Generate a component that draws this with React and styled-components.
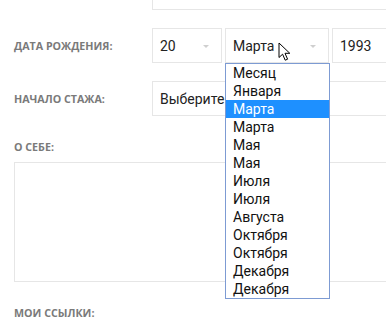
import React from 'react';
import styled, { createGlobalStyle } from 'styled-components';

const GlobalStyle = createGlobalStyle`
  html, body {
    margin: 0;
    padding: 0;
    background: #fff;
    overflow: hidden;
  }
  body {
    font-family: Roboto, "Liberation Sans", sans-serif;
  }
`;

const months = [
  'Месяц', 'Января', 'Марта', 'Марта', 'Мая', 'Мая', 'Июля',
  'Июля', 'Августа', 'Октября', 'Октября', 'Декабря', 'Декабря',
];

export default function App() {
  return (
    <>
      <GlobalStyle />
      <Page>
        <Row>
          <span />
          <Field />
        </Row>
        <Row>
          <Label>Дата рождения:</Label>
          <Selects>
            <Select $w={70}>
              20
              <Caret />
            </Select>
            <Holder>
              <Select $w={104}>
                Марта
                <Caret />
              </Select>
              <Menu>
                {months.map((m, i) => (
                  <Option key={i} $active={i === 2}>{m}</Option>
                ))}
              </Menu>
              <Pointer width="14" height="20" viewBox="0 0 14 20">
                <path
                  d="M1 1 L1 15.5 L4.6 12.2 L7.2 18.2 L9.6 17.2 L7 11.3 L11.8 11.3 Z"
                  fill="#fff"
                  stroke="#000"
                  strokeWidth="1"
                  strokeLinejoin="round"
                />
              </Pointer>
            </Holder>
            <Select $w={120}>1993</Select>
          </Selects>
        </Row>
        <Row>
          <Label>Начало стажа:</Label>
          <Field>Выберите</Field>
        </Row>
        <Block>
          <Label>О себе:</Label>
          <TextArea />
        </Block>
        <Block>
          <Label>Мои ссылки:</Label>
        </Block>
      </Page>
    </>
  );
}

const Page = styled.div`
  margin-top: -25px;
  padding-left: 14px;
  display: flex;
  flex-direction: column;
  gap: 18px;
  width: 480px;
`;

const Row = styled.div`
  display: grid;
  grid-template-columns: 138px 1fr;
  align-items: center;
`;

const Label = styled.div`
  font-family: "Open Sans", "Liberation Sans", sans-serif;
  font-weight: 700;
  font-size: 10.7px;
  line-height: 14px;
  text-transform: uppercase;
  color: #7a7a7a;
`;

const Field = styled.div`
  box-sizing: border-box;
  height: 35px;
  width: 340px;
  border: 1px solid #e6e6e6;
  padding: 0 7px;
  display: flex;
  align-items: center;
  font-size: 14px;
  color: #222;
`;

const Selects = styled.div`
  display: flex;
  gap: 3px;
`;

const Holder = styled.div`
  position: relative;
`;

const Select = styled.div`
  box-sizing: border-box;
  position: relative;
  height: 35px;
  width: ${(p) => p.$w}px;
  border: 1px solid #e6e6e6;
  padding: 0 7px;
  display: flex;
  align-items: center;
  font-size: 14px;
  color: #222;
`;

const Caret = styled.span`
  position: absolute;
  right: 12px;
  top: 16px;
  width: 0;
  height: 0;
  border-left: 3px solid transparent;
  border-right: 3px solid transparent;
  border-top: 3px solid #cfcfcf;
`;

const Menu = styled.div`
  position: absolute;
  top: 35px;
  left: 0;
  box-sizing: border-box;
  width: 105px;
  border: 1px solid #7d9bd3;
  background: #fff;
  z-index: 2;
`;

const Option = styled.div`
  height: 18px;
  line-height: 18px;
  padding-left: 7px;
  font-size: 14px;
  color: ${(p) => (p.$active ? '#fff' : '#111')};
  background: ${(p) => (p.$active ? '#1e90ff' : 'transparent')};
`;

const Pointer = styled.svg`
  position: absolute;
  left: 53px;
  top: 14px;
  z-index: 3;
`;

const Block = styled.div`
  display: flex;
  flex-direction: column;
  gap: 8px;
  margin-top: 6px;
`;

const TextArea = styled.div`
  box-sizing: border-box;
  height: 120px;
  width: 460px;
  border: 1px solid #e6e6e6;
`;
